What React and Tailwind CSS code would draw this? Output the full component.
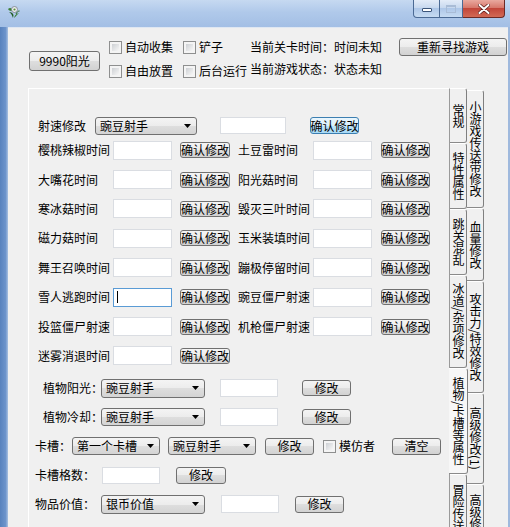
import React from "react";

function Btn({ className = "", children, focus }) {
  return (
    <div
      className={
        "flex shrink-0 items-center justify-center rounded-[3px] border whitespace-nowrap " +
        (focus
          ? "border-[#3c7fb1] bg-[linear-gradient(#eaf6fd,#d9f0fc_50%,#bee6fd_50%,#a7d9f5)] "
          : "border-[#707070] bg-[linear-gradient(#f4f4f4,#ececec_50%,#dedede_50%,#d2d2d2)] ") +
        className
      }
    >
      {children}
    </div>
  );
}

function Select({ className = "", value }) {
  return (
    <div
      className={
        "flex shrink-0 items-center rounded-[3px] border border-[#707070] bg-[linear-gradient(#f4f4f4,#ececec_50%,#dedede_50%,#d4d4d4)] pl-[4px] pr-[5px] " +
        className
      }
    >
      <span className="flex-1 whitespace-nowrap">{value}</span>
      <svg width="7" height="4" viewBox="0 0 7 4">
        <path d="M0 0h7L3.5 4z" fill="#000" />
      </svg>
    </div>
  );
}

function Input({ className = "", focus }) {
  return (
    <div
      className={
        "flex shrink-0 items-center bg-white border " +
        (focus ? "border-[#5a9bd5]" : "border-[#dadde2]") +
        " " +
        className
      }
    >
      {focus && <div className="ml-[3px] h-[12px] w-px bg-black" />}
    </div>
  );
}

function Check({ label, className = "" }) {
  return (
    <div className={"flex items-center " + className}>
      <div className="h-[13px] w-[13px] shrink-0 border border-[#8e8f8f] bg-[#f4f4f4] p-[2px]">
        <div className="h-full w-full bg-[linear-gradient(135deg,#cdd0d4,#f7f7f7)]" />
      </div>
      <span className="ml-[3px] whitespace-nowrap">{label}</span>
    </div>
  );
}

function AppIcon() {
  return (
    <svg width="13" height="14" viewBox="0 0 13 14">
      <path d="M6 13 C5 10 4 8 2 7 C4 7 6 8 6.5 10 Z" fill="#1f5a1f" />
      <path d="M7 13 C8 10 9 9 12 8 C10 10 9 11 7 13 Z" fill="#2f7a2a" />
      <path d="M1 4 C3 2 5 3 6 6 C4 6 2 6 1 4 Z" fill="#3a7d33" />
      <circle cx="7.5" cy="4.5" r="3" fill="#e9ecef" stroke="#7a7f86" strokeWidth="0.8" />
      <circle cx="7.5" cy="4.5" r="1.1" fill="#5c8f3a" />
      <path d="M9 9 C10 7 11 6 12.5 6" stroke="#2f6b2a" strokeWidth="1" fill="none" />
    </svg>
  );
}

function TitleBar() {
  return (
    <div className="flex h-[27px] shrink-0 items-start bg-[linear-gradient(#c6d9f1,#b0c9ea_45%,#a3bfe5)]">
      <div className="ml-[7px] mt-[5px]">
        <AppIcon />
      </div>
      <div className="ml-auto mr-[5px] flex h-[18px]">
        <div className="flex w-[27px] items-center justify-center rounded-bl-[4px] border border-t-0 border-[#4b6a94] bg-[linear-gradient(#e3ecf8,#c8d9ef_45%,#aec7e8_50%,#c6dbf2)]">
          <div className="mt-[3px] h-[4px] w-[10px] rounded-[1px] border border-[#3b557a] bg-white" />
        </div>
        <div className="flex w-[23px] items-center justify-center border-b border-r border-[#4b6a94] bg-[linear-gradient(#e3ecf8,#c8d9ef_45%,#aec7e8_50%,#c6dbf2)]">
          <div className="h-[8px] w-[10px] border border-[#a9bcd6] border-t-2" />
        </div>
        <div className="flex w-[42px] items-center justify-center rounded-br-[4px] border border-l-0 border-t-0 border-[#6b2a25] bg-[linear-gradient(#e9a99f,#d7786c_45%,#c2463a_50%,#d26a55)]">
          <svg width="12" height="10" viewBox="0 0 12 10">
            <path d="M1.5 1 L10.5 9 M10.5 1 L1.5 9" stroke="#5a1c18" strokeWidth="3.4" strokeLinecap="round" />
            <path d="M1.5 1 L10.5 9 M10.5 1 L1.5 9" stroke="#fff" strokeWidth="2" strokeLinecap="round" />
          </svg>
        </div>
      </div>
    </div>
  );
}

function TopSection() {
  return (
    <div className="flex h-[60px] shrink-0 items-start">
      <Btn className="ml-[21px] mt-[23px] h-[20px] w-[71px]">9990阳光</Btn>
      <div className="ml-[9px] flex w-[74px] flex-col pt-[7px]">
        <Check className="h-[24px]" label="自动收集" />
        <Check className="h-[24px]" label="自由放置" />
      </div>
      <div className="flex w-[67px] flex-col pt-[7px]">
        <Check className="h-[24px]" label="铲子" />
        <Check className="h-[24px]" label="后台运行" />
      </div>
      <div className="flex flex-col pt-[8px]">
        <div className="flex h-[22px] items-center whitespace-nowrap">当前关卡时间：时间未知</div>
        <div className="flex h-[22px] items-center whitespace-nowrap">当前游戏状态：状态未知</div>
      </div>
      <Btn className="ml-auto mr-[1px] mt-[10px] h-[18px] w-[108px]">重新寻找游戏</Btn>
    </div>
  );
}

const timers = [
  ["樱桃辣椒时间", "土豆雷时间"],
  ["大嘴花时间", "阳光菇时间"],
  ["寒冰菇时间", "毁灭三叶时间"],
  ["磁力菇时间", "玉米装填时间"],
  ["舞王召唤时间", "蹦极停留时间"],
  ["雪人逃跑时间", "豌豆僵尸射速"],
  ["投篮僵尸射速", "机枪僵尸射速"],
  ["迷雾消退时间", null],
];

function Panel() {
  return (
    <div className="flex w-[422px] shrink-0 flex-col border-l border-t border-white border-r-[#9a9a9a] border-r pt-[26.5px]">
      <div className="flex h-[20px] items-center">
        <span className="ml-[9px] w-[57px] whitespace-nowrap">射速修改</span>
        <Select className="h-[18px] w-[102px]" value="豌豆射手" />
        <Input className="ml-[23px] h-[17px] w-[66px]" />
        <Btn focus className="ml-[24px] h-[17px] w-[49px]">确认修改</Btn>
      </div>

      {timers.map(([a, b], i) => (
        <div key={a} className="flex h-[29.4px] items-center">
          <span className="ml-[9px] w-[75px] whitespace-nowrap">{a}</span>
          <Input className="h-[19px] w-[59px]" focus={i === 5} />
          <Btn className="ml-[8px] h-[16px] w-[50px]">确认修改</Btn>
          {b && (
            <>
              <span className="ml-[8px] w-[75px] whitespace-nowrap">{b}</span>
              <Input className="h-[19px] w-[59px]" />
              <Btn className="ml-[9px] h-[16px] w-[49px]">确认修改</Btn>
            </>
          )}
        </div>
      ))}

      <div className="mt-[3.3px] flex h-[29px] items-center">
        <span className="ml-[14px] w-[58px] whitespace-nowrap">植物阳光：</span>
        <Select className="h-[19px] w-[104px]" value="豌豆射手" />
        <Input className="ml-[15px] h-[18px] w-[58px]" />
        <Btn className="ml-[24px] h-[16px] w-[49px]">修改</Btn>
      </div>
      <div className="flex h-[29px] items-center">
        <span className="ml-[14px] w-[58px] whitespace-nowrap">植物冷却：</span>
        <Select className="h-[18px] w-[104px]" value="豌豆射手" />
        <Input className="ml-[15px] h-[18px] w-[58px]" />
        <Btn className="ml-[24px] h-[16px] w-[49px]">修改</Btn>
      </div>
      <div className="flex h-[29px] items-center">
        <span className="ml-[6px] w-[37px] whitespace-nowrap">卡槽：</span>
        <Select className="h-[18px] w-[88px]" value="第一个卡槽" />
        <Select className="ml-[8px] h-[18px] w-[88px]" value="豌豆射手" />
        <Btn className="ml-[9px] h-[17px] w-[49px]">修改</Btn>
        <Check className="ml-[9px]" label="模仿者" />
        <Btn className="ml-[17px] h-[17px] w-[49px]">清空</Btn>
      </div>
      <div className="flex h-[29px] items-center">
        <span className="ml-[6px] w-[67px] whitespace-nowrap">卡槽格数：</span>
        <Input className="h-[17px] w-[58px]" />
        <Btn className="ml-[16px] h-[17px] w-[50px]">修改</Btn>
      </div>
      <div className="flex h-[29px] items-center">
        <span className="ml-[6px] w-[66px] whitespace-nowrap">物品价值：</span>
        <Select className="h-[19px] w-[104px]" value="银币价值" />
        <Input className="ml-[16px] h-[18px] w-[58px]" />
        <Btn className="ml-[16px] h-[17px] w-[49px]">修改</Btn>
      </div>
    </div>
  );
}

function VTab({ label, className = "", selected, top }) {
  return (
    <div
      className={
        "flex shrink-0 justify-center rounded-r-[3px] border-r border-b border-t border-t-white border-r-[#7f7f7f] border-b-[#8a8a8a] " +
        (top ? "items-start pt-[9px] " : "items-center ") +
        (selected ? "relative z-10 -ml-px w-[19px] bg-[#f7f7f7] " : "w-[17px] bg-[#f0f0f0] ") +
        className
      }
    >
      <span className="whitespace-nowrap leading-none [writing-mode:vertical-rl]">{label}</span>
    </div>
  );
}

function TabControl() {
  return (
    <div className="ml-[20px] flex h-[480px] shrink-0">
      <Panel />
      <div className="flex w-[17px] shrink-0 flex-col">
        <VTab className="h-[55px]" label="常规" />
        <VTab className="h-[66px]" label="特性属性" />
        <VTab className="h-[66px]" label="跳关混乱" />
        <VTab className="h-[93px]" label="冰道/杂项修改" />
        <VTab selected className="h-[106px]" label="植物/卡槽等属性" />
        <VTab top className="h-[100px]" label="冒险传送" />
      </div>
      <div className="flex w-[17px] shrink-0 flex-col pt-[2px]">
        <VTab className="h-[118px]" label="小游戏传送带修改" />
        <VTab className="h-[73px]" label="血量修改" />
        <VTab className="h-[112px]" label="攻击力/特效修改" />
        <VTab className="h-[91px]" label="高级修改(1)" />
        <VTab top className="h-[100px]" label="高级修改(2)" />
      </div>
    </div>
  );
}

export default function App() {
  return (
    <div className="flex h-[527px] w-[510px] flex-col overflow-hidden bg-[#6e94c9] font-['Noto_Sans_CJK_SC',sans-serif] text-[12px] leading-none text-black">
      <TitleBar />
      <div className="flex min-h-0 flex-1">
        <div className="w-[8px] shrink-0 bg-[linear-gradient(90deg,#5882bd,#6d94cb_70%,#a9c1e1)]" />
        <div className="flex w-[500px] shrink-0 flex-col border-t border-[#dfe7f2] bg-[#f0f0f0]">
          <TopSection />
          <TabControl />
        </div>
        <div className="flex-1 bg-[#9fb9dd]" />
      </div>
    </div>
  );
}
